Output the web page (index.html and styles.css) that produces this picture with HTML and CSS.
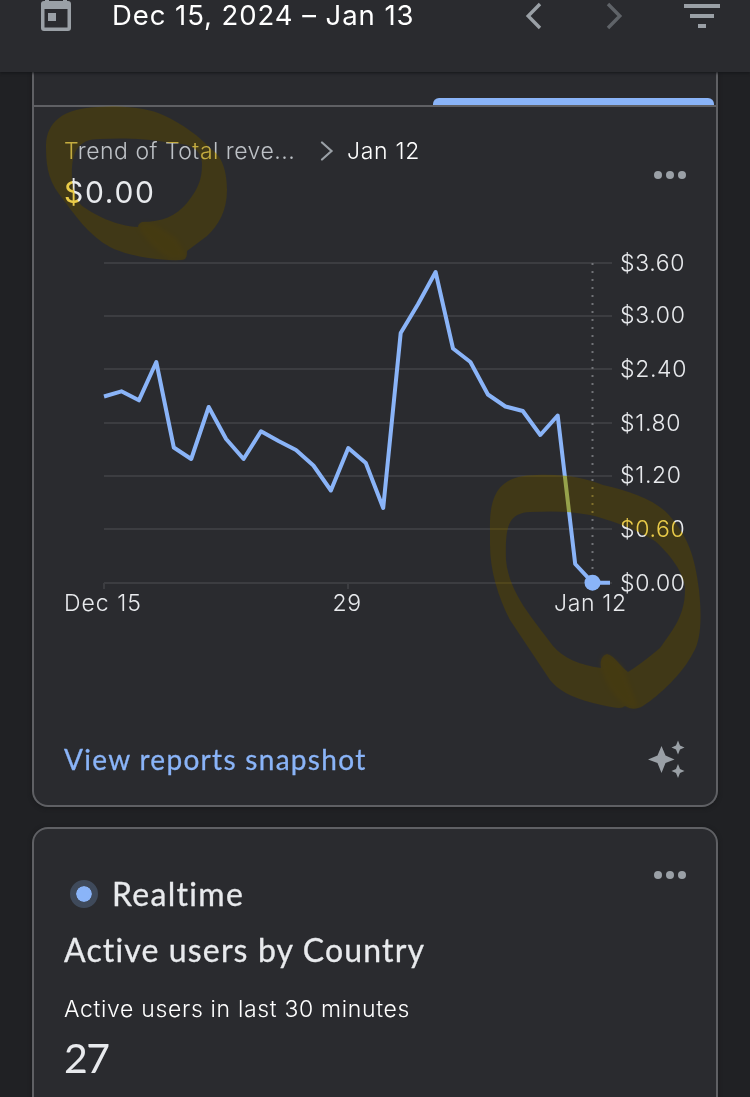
FILE: index.html
```
<!DOCTYPE html>
<html lang="en">
<head>
    <meta charset="utf-8">
    <meta name="viewport" content="width=device-width, initial-scale=1">
    <title>Analytics</title>

    <link rel="stylesheet" href="styles.css">
</head>
<body>
<header class="topbar">
    <svg class="icon-calendar" width="32" height="36" viewBox="0 0 32 36">
        <path fill="#9aa0a6" fill-rule="evenodd" d="M5 0h4v5h14V0h4v5h1q3 0 3 3v24q0 3-3 3H4q-3 0-3-3V8q0-3 3-3h1zM4.500 13v18.500h23V13z"/>
        <path fill="#9aa0a6" d="M8 17h8v8H8z"/>
    </svg>
    <div class="date-range">Dec 15, 2024 – Jan 13</div>
    <svg class="icon-prev" width="18" height="28" viewBox="0 0 18 28">
        <path fill="none" stroke="#9aa0a6" stroke-width="3.400" d="M15 2L3.200 14L15 26"/>
    </svg>
    <svg class="icon-next" width="18" height="28" viewBox="0 0 18 28">
        <path fill="none" stroke="#5f6368" stroke-width="3.400" d="M3 2L14.800 14L3 26"/>
    </svg>
    <svg class="icon-filter" width="36" height="24" viewBox="0 0 36 24">
        <path fill="#9aa0a6" d="M0 0h36v4H0zM6 10h24v4H6zM14 20h8v4h-8z"/>
    </svg>
</header>

<main class="cards">
    <section class="card card-trend">
        <div class="tabs"><div class="tab-active"></div></div>
        <div class="trend-head">
            <div>
                <div class="crumbs">
                    <span class="crumb-parent">Trend of Total reve...</span>
                    <svg width="14" height="20" viewBox="0 0 14 20">
                        <path fill="none" stroke="#9aa0a6" stroke-width="2.200" stroke-linecap="round" d="M2 1.500L11.500 10L2 18.500"/>
                    </svg>
                    <span class="crumb-current">Jan 12</span>
                </div>
                <div class="amount">$0.00</div>
            </div>
            <div class="more"><i></i><i></i><i></i></div>
        </div>
        <svg class="chart" width="682" height="400" viewBox="34 232 682 400">
            <path class="grid" d="M104 263H612M104 316H612M104 369H612M104 423H612M104 476H612M104 529H612M104 583H612M104 583V589M348 583V589"/>
            <path class="cursor" d="M592.500 263V576"/>
            <polyline class="line" points="104,396.500 121.400,391.300 138.900,400.300 156.300,362 173.800,447.500 191.200,459 208.700,407 226.100,439 243.600,459 261,431.300 278.500,441 296,450 313.400,465.500 330.900,490.500 348.300,448 365.800,463 383.200,508 400.700,333 418.100,304 435.600,272 453,348.500 470.400,362 487.900,394.500 505.400,406.500 522.800,411 540.300,435 557.700,415.500 575.200,564 592.600,582.700 610,582.700"/>
            <circle class="point" cx="592.500" cy="582.700" r="8"/>
            <g class="labels">
                <text x="620" y="271">$3.60</text>
                <text x="620" y="323">$3.00</text>
                <text x="620" y="377">$2.40</text>
                <text x="620" y="431">$1.80</text>
                <text x="620" y="483">$1.20</text>
                <text x="620" y="537">$0.60</text>
                <text x="620" y="591">$0.00</text>
                <text class="first-day" x="64" y="611">Dec 15</text>
                <text x="332.500" y="611">29</text>
                <text x="554" y="611">Jan 12</text>
            </g>
        </svg>
        <div class="card-foot">
            <a class="link">View reports snapshot</a>
            <svg width="38" height="38" viewBox="0 0 38 38">
                <path fill="#9aa0a6" d="M13.500 6L17.500 15.500L26.500 19.500L17.500 23L13.500 33L9.500 23L0 19.500L9.500 15.500zM30 .500L32 5.500L36.500 7.500L32 9.500L30 14.500L28 9.500L23.500 7.500L28 5.500zM30 24L32 29L36.500 31L32 33L30 38L28 33L23.500 31L28 29z"/>
            </svg>
        </div>
    </section>

    <section class="card card-realtime">
        <div class="realtime-head">
            <span class="pulse"></span>
            <h2 class="realtime-title">Realtime</h2>
            <div class="more"><i></i><i></i><i></i></div>
        </div>
        <h2 class="country-title">Active users by Country</h2>
        <div class="caption">Active users in last 30 minutes</div>
        <div class="count">27</div>
    </section>
</main>

<!-- highlighter: one layer tints what is under it, the other lifts the dark background -->
<svg class="marker marker-tint" width="750" height="1097" viewBox="0 0 750 1097">
    <defs>
        <g id="rings" fill-rule="evenodd">
            <path d="M46 145C47 122 62 109 97 107C130 105 150 109 163 115C183 124 200 137 211 149C224 157 227 176 227 190C227 211 218 226 207 236L187 251C187 257 186 260 181 260C160 261 127 256 110 247C88 235 75 215 59 194C47 178 46 162 46 145zM72 180C71 154 76 139 100 139C120 138 145 138 170 143C190 143 201 149 202 163C202 177 200 187 187 203C176 216 162 222 142 222Q138 224 138 227C116 226 94 215 81 205Q73 195 72 180z"/>
            <path d="M490 530C489 493 500 475 537 475C565 474 585 478 603 485C629 491 650 498 665 511C688 534 695 557 699 590C702 618 701 640 693 653C683 673 660 695 643 706C636 710 630 709 625 706C621 710 611 707 593 703C570 697 558 690 550 680L510 620C498 597 490 570 490 545zM506 560C505 527 508 513 530 512C552 511 570 511 590 515C619 522 645 534 655 541C674 558 686 578 685 590C685 615 673 630 660 648Q641 664 628 672C620 666 615 656 607 654C601 656 600 662 601 668C580 665 563 658 553 646C535 621 509 594 506 560z"/>
        </g>
    </defs>
    <use href="#rings" fill="#ffd945"/>
</svg>
<svg class="marker marker-lift" width="750" height="1097" viewBox="0 0 750 1097">
    <use href="#rings" fill="#1a160b"/>
</svg>
<svg class="marker" width="750" height="1097" viewBox="0 0 750 1097">
    <g class="overlap">
        <path d="M138 227Q142 219 156 225L176 238L186 254Q185 261 170 259Q150 248 138 227z"/>
        <path d="M601 668Q599 655 607 654L622 665L638 706Q629 710 622 703Q607 690 601 668z"/>
    </g>
</svg>
</body>
</html>
```
FILE: styles.css
```
body {
    position: relative;
    width: 750px;
    height: 1097px;
    margin: 0px;
    overflow: hidden;
    background-color: #202124;
    color: #e8eaed;
    font-family: Inter, "Liberation Sans", sans-serif;
}

svg {
    display: block;
    flex: none;
}

.topbar {
    position: relative;
    display: flex;
    align-items: flex-start;
    box-sizing: border-box;
    height: 72px;
    padding-left: 40px;
    background-color: #2a2b2f;
    box-shadow: 0px 1px 3px #141518;
}

.icon-calendar {
    margin-top: -4px;
}

.date-range {
    width: 413px;
    margin-left: 40px;
    line-height: 31px;
    font-size: 27.500px;
    letter-spacing: 0.930px;
    color: #ffffff;
}

.icon-prev {
    margin-top: 2px;
}

.icon-next {
    margin: 2px 0px 0px 62px;
}

.icon-filter {
    margin: 4px 0px 0px 61px;
}

.cards {
    padding: 0px 32px;
}

.card {
    box-sizing: border-box;
    border: solid 2px #5f6064;
    border-radius: 16px;
    background-color: #2a2b2f;
    box-shadow: 0px 1px 4px #18191b;
}

.card-trend {
    height: 735px;
    border-top: none;
    border-radius: 0px 0px 16px 16px;
}

.tabs {
    display: flex;
    justify-content: flex-end;
    align-items: flex-end;
    height: 33px;
    padding-right: 2px;
    border-bottom: solid 2px #5f6064;
}

.tab-active {
    width: 281px;
    height: 7px;
    border-radius: 6px 6px 0px 0px;
    background-color: #8ab4f8;
}

.trend-head {
    display: flex;
    justify-content: space-between;
    height: 125px;
    padding: 0px 30px;
}

.trend-head .more {
    margin-top: 64px;
}

.crumbs {
    display: flex;
    align-items: center;
    height: 30px;
    margin-top: 29px;
    font-size: 23px;
    font-weight: 300;
    letter-spacing: 0.500px;
}

.crumb-parent {
    width: 256px;
    color: #bdc1c6;
}

.crumb-current {
    margin-left: 13px;
    color: #ffffff;
    font-weight: 350;
    letter-spacing: 0.700px;
}

.amount {
    margin-top: 6px;
    line-height: 40px;
    font-size: 30px;
    letter-spacing: 1.700px;
}

.more {
    display: flex;
    gap: 4px;
}

.more i {
    width: 8px;
    height: 8px;
    border-radius: 50%;
    background-color: #9aa0a6;
}

.grid {
    fill: none;
    stroke: #3c3d41;
    stroke-width: 2;
}

.cursor {
    fill: none;
    stroke: #707277;
    stroke-width: 2;
    stroke-dasharray: 2 6;
}

.line {
    fill: none;
    stroke: #8ab4f8;
    stroke-width: 4;
    stroke-linejoin: round;
}

.point {
    fill: #8ab4f8;
}

.labels {
    fill: #e8eaed;
    font-size: 23px;
    font-weight: 330;
    letter-spacing: 0.650px;
}

.labels .first-day {
    letter-spacing: 1px;
}

.card-foot {
    display: flex;
    align-items: center;
    justify-content: space-between;
    height: 58px;
    margin-top: 98px;
    padding: 0px 30px;
}

.link {
    font-family: Lato, sans-serif;
    font-size: 28px;
    letter-spacing: 1.300px;
    color: #8ab4f8;
    -webkit-text-stroke: 0.300px #8ab4f8;
}

.card-realtime {
    height: 300px;
    margin-top: 20px;
    padding: 31px 30px 0px 30px;
}

.realtime-head {
    display: flex;
    align-items: center;
    height: 68px;
}

.realtime-head .more {
    align-self: flex-start;
    margin: 11px 0px 0px auto;
}

.pulse {
    width: 16px;
    height: 16px;
    margin: 0px 14px 0px 6px;
    border: solid 6px #3f4a5b;
    border-radius: 50%;
    background-color: #8ab4f8;
    background-clip: padding-box;
}

.realtime-title,
.country-title {
    margin: 0px;
    font-family: Lato, sans-serif;
    font-size: 32px;
    font-weight: 400;
    line-height: 40px;
    letter-spacing: 1.150px;
    -webkit-text-stroke: 0.300px #e8eaed;
}

.realtime-title {
    letter-spacing: 1.300px;
}

.country-title {
    margin-top: 2px;
}

.caption {
    margin-top: 23px;
    line-height: 32px;
    font-size: 23px;
    font-weight: 320;
    letter-spacing: 0.660px;
    color: #ffffff;
}

.count {
    margin-top: 8px;
    line-height: 50px;
    font-family: Lato, sans-serif;
    font-size: 41px;
    letter-spacing: -1.500px;
}

.marker {
    position: absolute;
    left: 0px;
    top: 0px;
    pointer-events: none;
}

.marker-tint {
    mix-blend-mode: multiply;
    filter: blur(0.700px);
}

.marker-lift {
    mix-blend-mode: screen;
    filter: blur(0.700px);
}

.overlap {
    fill: #504006;
    opacity: 0.300;
    filter: blur(2px);
}
```
